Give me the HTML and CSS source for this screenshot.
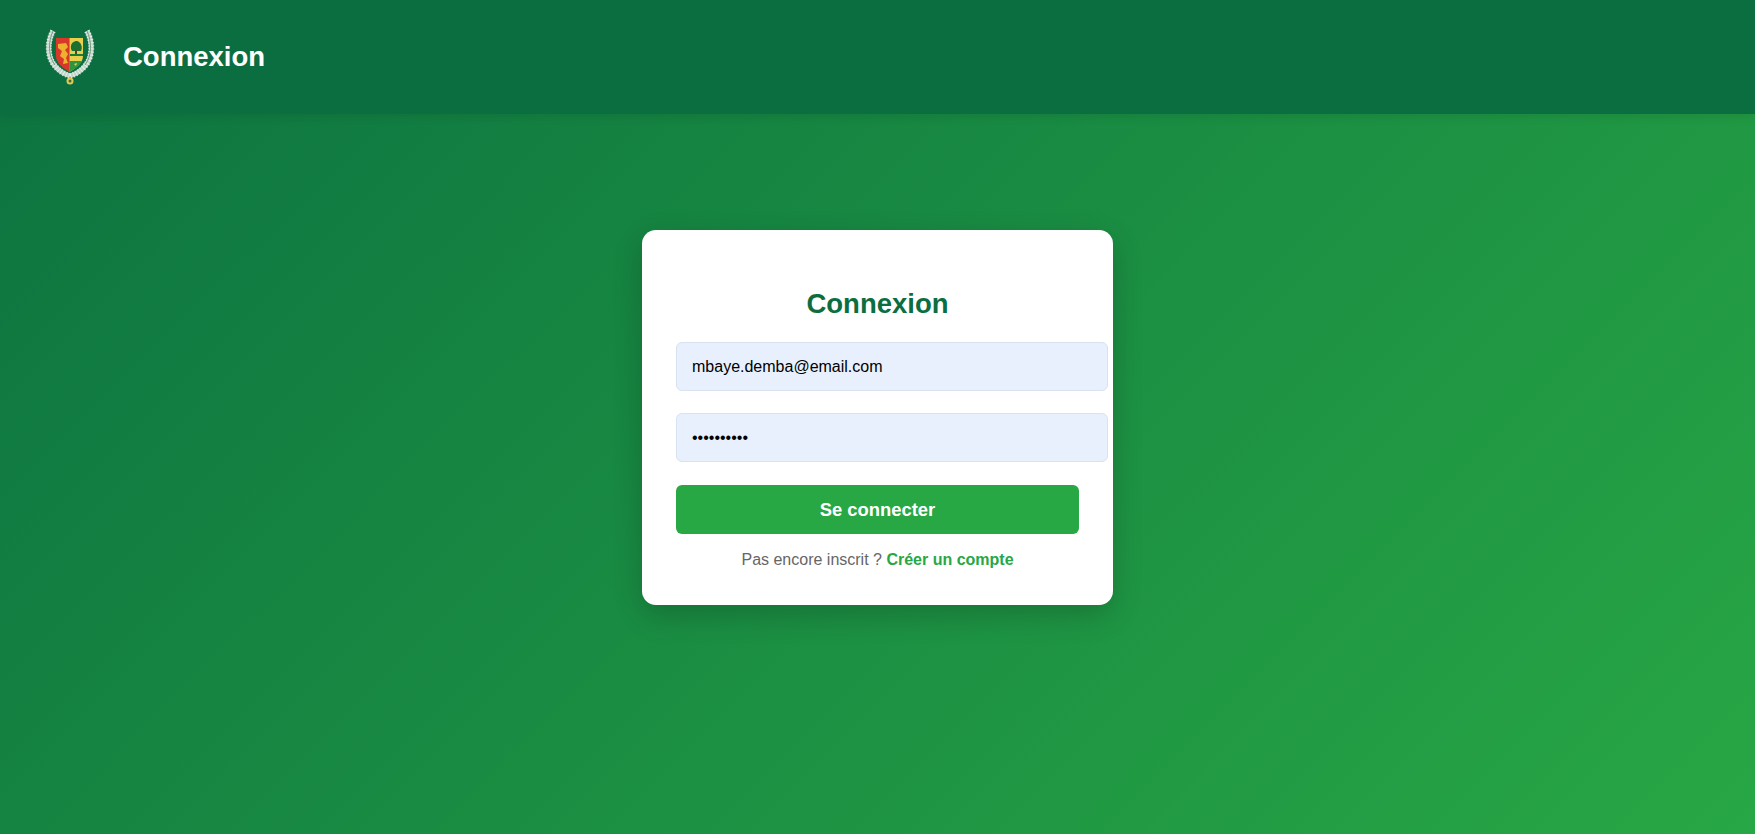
FILE: index.html
```html
<!DOCTYPE html>
<html lang="fr">
<head>
	<meta charset="UTF-8"/>
	<meta name="viewport" content="width=device-width, initial-scale=1.0"/>
	<title>Connexion</title>
	<link rel="stylesheet" href="styles.css">
</head>
<body>
	<header>
		<svg class="logo" viewBox="0 0 50 58" aria-label="Armoiries du Sénégal">
			<!-- palmes -->
			<g fill="none" stroke-linejoin="round">
				<path d="M8 3C2 14 2 29 10 38C14 43 19 46 25 48" stroke="#c3d4c9" stroke-width="5"/>
				<path d="M42 3C48 14 48 29 40 38C36 43 31 46 25 48" stroke="#c3d4c9" stroke-width="5"/>
				<path d="M8 3C2 14 2 29 10 38C14 43 19 46 25 48" stroke="#f4f7f4" stroke-width="6" stroke-dasharray="1 2" opacity=".75"/>
				<path d="M42 3C48 14 48 29 40 38C36 43 31 46 25 48" stroke="#f4f7f4" stroke-width="6" stroke-dasharray="1 2" opacity=".75"/>
				<path d="M8 3C3 14 3 28 10 37" stroke="#6f9a80" stroke-width="1"/>
				<path d="M42 3C47 14 47 28 40 37" stroke="#6f9a80" stroke-width="1"/>
			</g>
			<!-- ecu -->
			<path d="M24.5 10H11V28C11 35 18 40 24.500 44Z" fill="#d8382a"/>
			<path d="M24.5 10H38V28C38 35 31 40 24.500 44Z" fill="#e6d04c"/>
			<path d="M13 16L21 15L23 19L20 22L23 26L21 30L23 35L18 36L19 31L15 28L17 23L13 20Z" fill="#eeb12f"/>
			<path d="M26 21C25 15 29 13 32 13C36 14 38 19 36 23H27Z" fill="#1b6f30"/>
			<rect x="30" y="22" width="2" height="5" fill="#4f4a22"/>
			<path d="M25 26H38V28H25Z" fill="#1b7a34"/>
			<path d="M24.500 33H37C35 38 29 41 24.500 44Z" fill="#2f9440"/>
			<path d="M29 36L32 35L31 38Z" fill="#e6d04c"/>
			<!-- etoile -->
			<circle cx="25" cy="53" r="3.500" fill="#e3c94f"/>
			<circle cx="25" cy="53" r="1.500" fill="#3c6f3f"/>
		</svg>
		<h1>Connexion</h1>
	</header>

	<main>
		<form class="card">
			<h2>Connexion</h2>
			<input type="email" value="mbaye.demba@email.com">
			<input class="last" type="password" value="motdepasse">
			<button type="button">Se connecter</button>
			<p>Pas encore inscrit ? <a href="#">Créer un compte</a></p>
		</form>
	</main>
</body>
</html>
```

FILE: styles.css
```css
*{
	font-family: "Liberation Sans", Arial, sans-serif;
	margin: 0;
	padding: 0;
}
body{
	height: 100vh;
	overflow: hidden;
	background: linear-gradient(135deg, #0c7240, #28a745);
}
header{
	display: flex;
	align-items: center;
	gap: 28px;
	height: 114px;
	padding-left: 45px;
	background: #0b6e41;
	box-shadow: 0 2px 10px rgba(0,0,0,.1);
}
header h1{
	color: #fff;
	font-size: 27.5px;
}
.logo{
	width: 50px;
	height: 58px;
}
main{
	display: flex;
	justify-content: center;
	padding-top: 116px;
}
.card{
	width: 403px;
	height: 303px;
	padding: 36px 34px;
	background: #fff;
	border-radius: 14px;
	box-shadow: 0 10px 30px rgba(0,0,0,.2);
}
.card h2{
	color: #0b6e41;
	font-size: 27.5px;
	text-align: center;
	line-height: 32px;
	margin: 22px 0 22px;
}
.card input{
	display: block;
	box-sizing: content-box;
	width: calc(100% - 1px);
	height: 19px;
	padding: 14px 13px 14px 15px;
	margin-bottom: 22px;
	border: 1px solid #d9e2f0;
	border-radius: 6px;
	background: #e8f0fe;
	color: #000;
	font-size: 16px;
	outline: none;
}
.card input.last{
	margin-bottom: 23px;
}
.card button{
	display: block;
	width: 100%;
	height: 49px;
	border: none;
	border-radius: 6px;
	background: #28a745;
	color: #fff;
	font-size: 18.4px;
	font-weight: bold;
}
.card p{
	margin-top: 17px;
	color: #666;
	font-size: 16px;
	text-align: center;
}
.card a{
	color: #28a745;
	font-weight: bold;
	text-decoration: none;
}
```
